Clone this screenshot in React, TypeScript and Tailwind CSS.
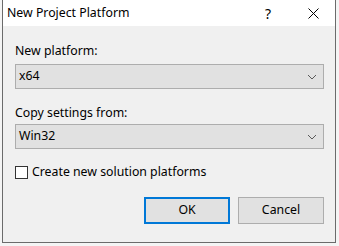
import React from "react";

const font = { fontFamily: '"Noto Sans", "Segoe UI", sans-serif' };

function Chevron() {
  return (
    <svg width="10" height="6" viewBox="0 0 10 6" className="shrink-0">
      <path d="M1 1 L5 5 L9 1" fill="none" stroke="#5a5a5a" strokeWidth="1" />
    </svg>
  );
}

function Combo({ value }: { value: string }) {
  return (
    <div className="flex items-center h-[25px] border border-[#adadad] bg-[#e1e1e1] pl-[3px] pr-[6px] text-[12.3px] text-black">
      <span className="flex-1 leading-none">{value}</span>
      <Chevron />
    </div>
  );
}

export default function App() {
  return (
    <div className="w-[339px] h-[246px] bg-[#f4f4f4] relative overflow-hidden" style={font}>
      <div className="ml-[2px] w-[334px] h-[243px] border-x border-b border-[#6b6b6b] bg-[#f0f0f0] flex flex-col">
        <div className="h-[26px] bg-white flex items-center pl-[4px] text-[12.3px] text-black">
          <span className="flex-1">New Project Platform</span>
          <span className="w-[10px] text-center mr-[35px] text-[14px]">?</span>
          <svg width="11" height="11" viewBox="0 0 11 11" className="mr-[16px]">
            <path d="M0.5 0.5 L10.5 10.5 M10.5 0.5 L0.5 10.5" stroke="#000" strokeWidth="1" />
          </svg>
        </div>
        <div className="flex flex-col pl-[12px] pr-[11px] pt-[17px] text-[12.3px] text-black">
          <div className="h-[16px] leading-[16px]">New platform:</div>
          <div className="mt-[5px]">
            <Combo value="x64" />
          </div>
          <div className="mt-[16px] h-[16px] leading-[16px]">Copy settings from:</div>
          <div className="mt-[3px]">
            <Combo value="Win32" />
          </div>
          <div className="mt-[17px] flex items-center h-[13px]">
            <div className="w-[13px] h-[13px] border border-[#333] bg-white" />
            <span className="ml-[4px] leading-none">Create new solution platforms</span>
          </div>
          <div className="mt-[18px] flex justify-end gap-[8px]">
            <div className="w-[86px] h-[27px] border-2 border-[#0078d7] bg-[#e1e1e1] flex items-center justify-center">OK</div>
            <div className="w-[86px] h-[27px] border border-[#adadad] bg-[#e1e1e1] flex items-center justify-center">Cancel</div>
          </div>
        </div>
      </div>
    </div>
  );
}
